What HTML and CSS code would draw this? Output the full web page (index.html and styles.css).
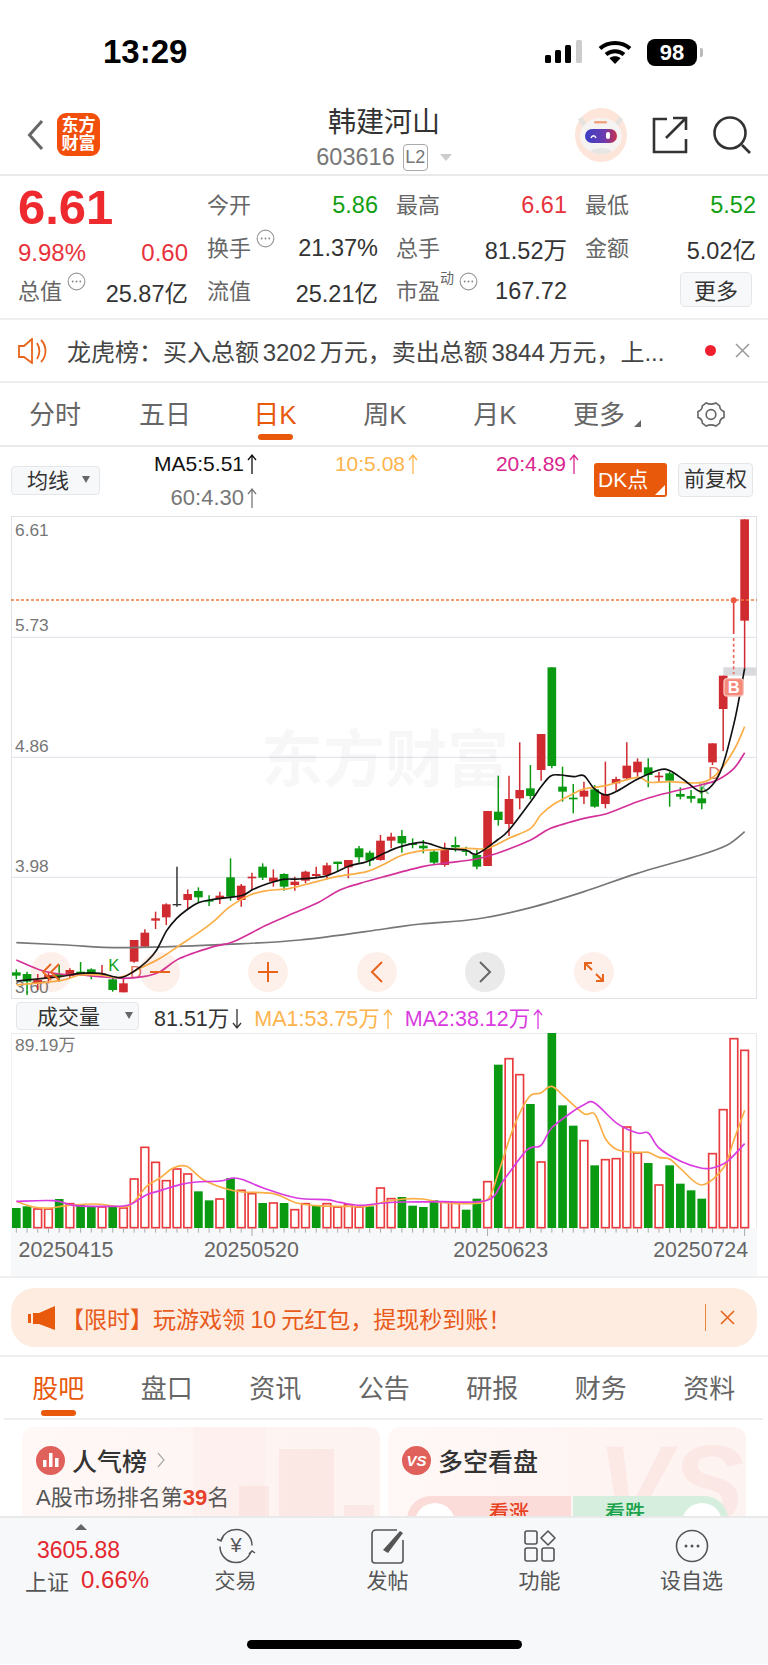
FILE: index.html
```html
<!DOCTYPE html>
<html lang="zh-CN">
  <head>
    <title>韩建河山</title>
    <meta charset="UTF-8" />
    <link rel="stylesheet" href="styles.css">
  </head>
  <body>
    <svg class="defs" width="0" height="0">
      <symbol id="up" viewBox="0 0 12 22"><path d="M6 21V2M2 7l4-5 4 5" fill="none" stroke="currentColor" stroke-width="1.3"/></symbol>
      <symbol id="down" viewBox="0 0 12 22"><path d="M6 1v19M2 15l4 5 4-5" fill="none" stroke="currentColor" stroke-width="1.3"/></symbol>
      <symbol id="info" viewBox="0 0 20 20"><circle cx="10" cy="10" r="8.8" fill="none" stroke="#999" stroke-width="1.2"/><circle cx="6" cy="10" r="1" fill="#888"/><circle cx="10" cy="10" r="1" fill="#888"/><circle cx="14" cy="10" r="1" fill="#888"/></symbol>
    </svg>
    <div id="page">
      <div class="status-bar">
        <span class="time">13:29</span>
        <div class="status-icons">
          <svg width="38" height="24" viewBox="0 0 38 24"><rect x="0" y="15" width="6" height="8" rx="1.5"/><rect x="10" y="10" width="6" height="13" rx="1.5"/><rect x="20" y="5" width="6" height="18" rx="1.5"/><rect x="31" y="0" width="6" height="23" rx="1.5" fill="#ccc"/></svg>
          <svg width="34" height="24" viewBox="0 0 34 24"><path d="M2 8.5C10 1 24 1 32 8.5" fill="none" stroke="#000" stroke-width="4"/><path d="M8 14.5c5-4.500 13-4.500 18 0" fill="none" stroke="#000" stroke-width="4"/><path d="M11.500 18.200c3-2.600 8-2.600 11 0L17 24z"/></svg>
          <div class="battery">98</div>
          <div class="battery-cap"></div>
        </div>
      </div>

      <div class="nav">
        <div class="nav-left">
          <svg width="17" height="32" viewBox="0 0 17 32"><path d="M15 2L2.500 16 15 30" fill="none" stroke="#666" stroke-width="3"/></svg>
          <div class="logo"><span>东方</span><span>财富</span></div>
        </div>
        <div class="nav-title">
          <div class="stock-name">韩建河山</div>
          <div class="stock-code">
            <span>603616</span>
            <span class="l2">L2</span>
            <i class="caret"></i>
          </div>
        </div>
        <div class="nav-right">
          <svg class="avatar" width="54" height="54" viewBox="0 0 54 54">
            <defs>
              <linearGradient id="visor" x1="0" x2="1"><stop offset="0" stop-color="#3b3fc4"/><stop offset="0.6" stop-color="#6a3bb0"/><stop offset="1" stop-color="#c9304a"/></linearGradient>
            </defs>
            <ellipse cx="27" cy="27" rx="26" ry="27" fill="#fde5da"/>
            <path d="M6 10l5 8M47 10l-5 8" stroke="#e6e2df" stroke-width="5"/>
            <ellipse cx="27" cy="28" rx="21" ry="18" fill="#f6f4f3"/>
            <rect x="20" y="13" width="13" height="2.500" rx="1.200" fill="#f0a67c"/>
            <rect x="11" y="21" width="32" height="14" rx="7" fill="url(#visor)"/>
            <path d="M17 30c1-3 4-3 5 0" fill="none" stroke="#fff" stroke-width="1.300"/>
            <rect x="32" y="24" width="4" height="7" rx="2" fill="#fff"/>
            <ellipse cx="27" cy="43" rx="10" ry="3" fill="#e9e5e2"/>
          </svg>
          <svg width="36" height="38" viewBox="0 0 36 38" fill="none" stroke="#333" stroke-width="2.600">
            <path d="M15 3H2v33h32V23"/><path d="M14 22L33 3M21 2h13v12"/>
          </svg>
          <svg width="38" height="38" viewBox="0 0 38 38" fill="none" stroke="#333" stroke-width="2.600">
            <circle cx="17" cy="17" r="15.500"/><path d="M29 29l8 8"/>
          </svg>
        </div>
      </div>

      <div class="quote">
        <div class="quote-left">
          <div class="price">6.61</div>
          <div class="change"><span>9.98%</span><span>0.60</span></div>
          <div class="cell"><span class="label">总值<svg class="info"><use href="#info"/></svg></span><span class="val">25.87亿</span></div>
        </div>
        <div class="quote-grid">
          <div class="cell"><span class="label">今开</span><span class="val green">5.86</span></div>
          <div class="cell"><span class="label">最高</span><span class="val red">6.61</span></div>
          <div class="cell"><span class="label">最低</span><span class="val green">5.52</span></div>
          <div class="cell"><span class="label">换手<svg class="info"><use href="#info"/></svg></span><span class="val">21.37%</span></div>
          <div class="cell"><span class="label">总手</span><span class="val">81.52万</span></div>
          <div class="cell"><span class="label">金额</span><span class="val">5.02亿</span></div>
          <div class="cell"><span class="label">流值</span><span class="val">25.21亿</span></div>
          <div class="cell"><span class="label">市盈<sup>动</sup><svg class="info"><use href="#info"/></svg></span><span class="val">167.72</span></div>
          <div class="cell cell-btn"><button type="button" class="more-btn">更多</button></div>
        </div>
      </div>

      <div class="notice">
        <svg width="31" height="26" viewBox="0 0 31 26" fill="none" stroke="#e8641c" stroke-width="1.800"><path d="M1 8h5l8-7v24l-8-6H1z"/><path d="M19 5c3 5 3 11 0 16M23 2c6 6 6 16 0 22"/></svg>
        <span class="notice-text">龙虎榜：买入总额 3202 万元，卖出总额 3844 万元，上...</span>
        <i class="red-dot"></i>
        <svg width="15" height="15" viewBox="0 0 15 15"><path d="M1 1l13 13M14 1L1 14" stroke="#999" stroke-width="1.500"/></svg>
      </div>

      <div class="period-tabs">
        <div class="tab">分时</div>
        <div class="tab">五日</div>
        <div class="tab active">日K</div>
        <div class="tab">周K</div>
        <div class="tab">月K</div>
        <div class="tab">更多<i class="corner"></i></div>
        <div class="tab">
          <svg width="30" height="27" viewBox="0 0 30 28" fill="none" stroke="#666" stroke-width="1.700" stroke-linejoin="round"><path d="M10 2Q15 4.500 20 2L24 5Q24 9.500 28.500 11V17Q24 18.500 24 23L20 26Q15 23.500 10 26L6 23Q6 18.500 1.500 17V11Q6 9.500 6 5Z"/><circle cx="15" cy="14" r="5"/></svg>
        </div>
      </div>

      <div class="ma-row">
        <div class="select ma-select">均线<i class="caret-dark"></i></div>
        <div class="ma-values">
          <span class="ma-black">MA5:5.51<svg class="arrow"><use href="#up"/></svg></span>
          <span class="ma-orange">10:5.08<svg class="arrow"><use href="#up"/></svg></span>
          <span class="ma-pink">20:4.89<svg class="arrow"><use href="#up"/></svg></span>
          <span class="ma-gray">60:4.30<svg class="arrow"><use href="#up"/></svg></span>
        </div>
        <div class="dk-btn">DK点</div>
        <div class="fq-btn">前复权</div>
      </div>

      <div class="kline">
        <svg id="kline-svg" viewBox="33 18 2238 1449" width="746" height="483"></svg>
        <div class="watermark">东方财富</div>
        <div class="chart-btns">
          <div class="chart-btn"><svg width="22" height="22" viewBox="0 0 22 22" fill="none" stroke="#e8641c" stroke-width="1.800"><path d="M11 3L3 11l8 8M19 3l-8 8 8 8"/></svg></div>
          <div class="chart-btn"><svg width="22" height="22" viewBox="0 0 22 22"><path d="M1 11h20" stroke="#e8641c" stroke-width="2"/></svg></div>
          <div class="chart-btn"><svg width="22" height="22" viewBox="0 0 22 22"><path d="M1 11h20M11 1v20" stroke="#e8641c" stroke-width="2"/></svg></div>
          <div class="chart-btn"><svg width="14" height="24" viewBox="0 0 14 24"><path d="M12 2L2 12l10 10" fill="none" stroke="#e8641c" stroke-width="2"/></svg></div>
          <div class="chart-btn chart-btn-gray"><svg width="14" height="24" viewBox="0 0 14 24"><path d="M2 2l10 10L2 22" fill="none" stroke="#666" stroke-width="2"/></svg></div>
          <div class="chart-btn"><svg width="22" height="22" viewBox="0 0 22 22" fill="none" stroke="#e8641c" stroke-width="2"><path d="M2 9V2h7M2 2l7 7M20 13v7h-7M20 20l-7-7"/></svg></div>
        </div>
      </div>

      <div class="vol-row">
        <div class="select vol-select">成交量<i class="caret-dark"></i></div>
        <span class="vol-now">81.51万<svg class="arrow"><use href="#down"/></svg></span>
        <span class="ma-orange">MA1:53.75万<svg class="arrow"><use href="#up"/></svg></span>
        <span class="ma-violet">MA2:38.12万<svg class="arrow"><use href="#up"/></svg></span>
      </div>

      <div class="volume">
        <svg id="vol-svg" viewBox="33 100 2238 729" width="746" height="243"></svg>
      </div>

      <div class="promo-wrap">
        <div class="promo">
          <svg width="28" height="24" viewBox="0 0 28 24" fill="#e8590c"><rect x="0" y="8" width="3" height="9"/><path d="M5 7h6L27 0v24L11 18H5z"/></svg>
          <span class="promo-text">【限时】玩游戏领 10 元红包，提现秒到账！</span>
          <i class="promo-sep"></i>
          <svg width="15" height="15" viewBox="0 0 15 15"><path d="M1 1l13 13M14 1L1 14" stroke="#e8641c" stroke-width="1.600"/></svg>
        </div>
      </div>

      <div class="info-tabs">
        <div class="tab active">股吧</div>
        <div class="tab">盘口</div>
        <div class="tab">资讯</div>
        <div class="tab">公告</div>
        <div class="tab">研报</div>
        <div class="tab">财务</div>
        <div class="tab">资料</div>
      </div>

      <div class="cards">
        <div class="card card-left">
          <div class="card-deco deco-bars"><i></i><i></i><i></i></div>
          <div class="card-head">
            <span class="card-icon"><svg width="18" height="16" viewBox="0 0 18 16" fill="#fff"><rect x="1" y="8" width="3.500" height="7"/><rect x="7" y="1" width="3.500" height="14"/><rect x="13" y="6" width="3.500" height="9"/></svg></span>
            <span class="card-title">人气榜</span>
            <svg width="8" height="16" viewBox="0 0 8 16"><path d="M1 1l6 7-6 7" fill="none" stroke="#aaa" stroke-width="1.200"/></svg>
          </div>
          <div class="card-sub">A股市场排名第<b>39</b>名</div>
        </div>
        <div class="card">
          <div class="card-deco deco-vs">VS</div>
          <div class="card-head">
            <span class="card-icon vs-icon">VS</span>
            <span class="card-title">多空看盘</span>
          </div>
          <div class="vote">
            <div class="vote-up"><i></i><span>看涨</span></div>
            <div class="vote-down"><span>看跌</span><i></i></div>
          </div>
        </div>
      </div>

      <div class="footer">
        <div class="footer-row">
          <div class="index-box">
            <i class="index-up"></i>
            <div class="index-price">3605.88</div>
            <div class="index-line"><span class="index-name">上证</span><span class="index-pct">0.66%</span></div>
          </div>
          <div class="foot-item">
            <svg width="42" height="36" viewBox="0 0 42 36" fill="none" stroke="#555" stroke-width="1.500">
              <path d="M6 12C9 5 15 1.500 21 1.500c9 0 16 7 16 16"/><path d="M36 24c-3 7-9 10.500-15 10.500-9 0-16-7-16-16"/>
              <path d="M2 11l4 2 2-4M40 25l-3-2-3 3"/>
              <text x="21" y="24" class="yen">¥</text>
            </svg>
            <span>交易</span>
          </div>
          <div class="foot-item">
            <svg width="36" height="36" viewBox="0 0 36 36" fill="none" stroke="#555" stroke-width="1.600">
              <path d="M27 2H6a4 4 0 0 0-4 4v26a3 3 0 0 0 3 3h25a3 3 0 0 0 3-3V12"/>
              <path d="M13 22L30 3l3 2-15 20z" fill="#555" stroke="none"/>
            </svg>
            <span>发帖</span>
          </div>
          <div class="foot-item">
            <svg width="32" height="34" viewBox="0 0 32 34" fill="none" stroke="#555" stroke-width="1.600">
              <rect x="1" y="2" width="12" height="13" rx="2"/>
              <rect x="1" y="19" width="12" height="13" rx="2"/>
              <rect x="18" y="19" width="12" height="13" rx="2"/>
              <path d="M24 2l7 7-7 7-7-7z" stroke-linejoin="round"/>
            </svg>
            <span>功能</span>
          </div>
          <div class="foot-item">
            <svg width="34" height="36" viewBox="0 0 34 36"><circle cx="17" cy="18" r="15.500" fill="none" stroke="#555" stroke-width="1.600"/><circle cx="11" cy="18" r="1.500" fill="#555"/><circle cx="17" cy="18" r="1.500" fill="#555"/><circle cx="23" cy="18" r="1.500" fill="#555"/></svg>
            <span>设自选</span>
          </div>
        </div>
        <div class="home-bar"></div>
      </div>
    </div>
    <script src="chart.js"></script>
  </body>
</html>
```

FILE: styles.css
```css
* {
  box-sizing: border-box;
}

body {
  margin: 0;
  font-family: "Liberation Sans", "Noto Sans CJK SC", sans-serif;
  background-color: white;
  color: #333;
}

i {
  display: block;
}

.defs {
  display: block;
  height: 0;
}

#page {
  width: 768px;
  height: 1665px;
  overflow: hidden;
}

/* status bar */
.status-bar {
  display: flex;
  align-items: center;
  justify-content: space-between;
  height: 95px;
  padding: 9px 65px 0 103px;
}

.time {
  font-size: 33px;
  font-weight: bold;
  color: #000;
}

.status-icons {
  display: flex;
  align-items: center;
  gap: 15px;
}

.battery {
  width: 50px;
  height: 27px;
  margin-right: -12px;
  border-radius: 8px;
  background-color: #000;
  color: white;
  font-size: 22px;
  font-weight: bold;
  line-height: 27px;
  text-align: center;
}

.battery-cap {
  width: 3px;
  height: 9px;
  border-radius: 0 2px 2px 0;
  background-color: #bbb;
}

/* nav */
.nav {
  display: grid;
  grid-template-columns: 1fr auto 1fr;
  align-items: center;
  height: 81px;
  border-bottom: 2px solid #e9e9e9;
}

.nav-left {
  display: flex;
  align-items: center;
  gap: 13px;
  padding-left: 27px;
}

.logo {
  display: flex;
  flex-direction: column;
  align-items: center;
  justify-content: center;
  width: 43px;
  height: 43px;
  border-radius: 9px;
  background-color: #f24f0c;
  color: white;
  font-size: 17px;
  font-weight: bold;
  line-height: 18px;
}

.nav-title {
  padding-top: 8px;
  text-align: center;
}

.stock-name {
  font-size: 28px;
  line-height: 34px;
  color: #333;
}

.stock-code {
  display: flex;
  align-items: center;
  gap: 8px;
  height: 28px;
  margin-top: 3px;
  font-size: 23.500px;
  color: #777;
}

.l2 {
  width: 25px;
  height: 27px;
  border: 1px solid #aaa;
  border-radius: 4px;
  font-size: 18px;
  line-height: 25px;
}

.caret {
  width: 0;
  height: 0;
  margin-left: 4px;
  border-top: 7px solid #ccc;
  border-left: 6px solid transparent;
  border-right: 6px solid transparent;
}

.nav-right {
  display: flex;
  align-items: center;
  justify-content: flex-end;
  gap: 25px;
  padding-right: 17px;
}

.avatar {
  margin-right: -1px;
}

/* quote */
.quote {
  display: flex;
  gap: 19px;
  height: 144px;
  padding: 8px 12px 0 18px;
  border-bottom: 2px solid #eee;
}

.quote-left {
  width: 170px;
  flex-shrink: 0;
}

.price {
  height: 49px;
  font-size: 49px;
  font-weight: bold;
  line-height: 46px;
  color: #ee2a2e;
}

.change {
  display: flex;
  justify-content: space-between;
  height: 37px;
  padding-top: 3px;
  font-size: 24px;
  line-height: 34px;
  color: #e8323c;
}

.quote-grid {
  display: grid;
  flex: 1;
  grid-template-columns: repeat(3, 171px);
  grid-auto-rows: 43px;
  column-gap: 18px;
  height: 129px;
}

.cell {
  display: flex;
  align-items: center;
  justify-content: space-between;
  height: 43px;
  white-space: nowrap;
}

.label {
  display: flex;
  margin-top: -6px;
  font-size: 22px;
  color: #666;
}

.label sup {
  margin-top: -4px;
  font-size: 14px;
  line-height: 18px;
}

.info {
  width: 19px;
  height: 19px;
  margin: 0 0 0 5px;
  transform: translateY(-1px);
}

.val {
  font-size: 23.500px;
  color: #333;
}

.green {
  color: #12a012;
}

.red {
  color: #e8323c;
}

.cell-btn {
  align-items: flex-start;
  justify-content: flex-end;
  padding-top: 2px;
  padding-right: 4px;
}

.more-btn {
  width: 72px;
  height: 35px;
  padding: 0 0 3px;
  border: 1px solid #e4e6ea;
  border-radius: 5px;
  background-color: #f7f8fa;
  color: #333;
  font-family: inherit;
  font-size: 22px;
}

/* notice */
.notice {
  display: flex;
  align-items: center;
  height: 63px;
  padding: 0 18px;
  border-bottom: 2px solid #eee;
}

.notice-text {
  flex: 1;
  margin-left: 18px;
  font-size: 24px;
  word-spacing: -3px;
  color: #444;
  white-space: nowrap;
}

.red-dot {
  width: 11px;
  height: 11px;
  margin-right: 19px;
  border-radius: 50%;
  background-color: #f01f2f;
}

/* tabs */
.period-tabs {
  display: grid;
  grid-template-columns: repeat(5, 110px) 98px 126px;
  height: 64px;
  border-bottom: 2px solid #e9e9e9;
}

.info-tabs {
  display: grid;
  grid-template-columns: repeat(7, 108.5px);
  height: 63px;
  margin: 0 5px 0 4px;
  border-bottom: 2px solid #eee;
}

.tab {
  display: flex;
  flex-direction: column;
  align-items: center;
  position: relative;
  padding-top: 16px;
  font-size: 26px;
  line-height: 32px;
  color: #666;
}

.tab svg {
  margin-top: 2px;
}

.tab::after {
  content: " ";
  display: block;
  width: 35px;
  height: 6px;
  margin-top: 3px;
  border-radius: 3px;
}

.info-tabs .tab::after {
  margin-top: 5px;
}

.tab.active {
  color: #e8590c;
}

.tab.active::after {
  background-color: #e8590c;
}

.corner {
  position: absolute;
  right: 7px;
  top: 37px;
  width: 0;
  height: 0;
  border-bottom: 7px solid #666;
  border-left: 7px solid transparent;
}

/* ma row */
.ma-row {
  display: flex;
  align-items: flex-start;
  height: 69px;
  padding-left: 11px;
}

.select {
  display: flex;
  align-items: center;
  justify-content: space-between;
  border: 1px solid #e4e6ea;
  border-radius: 4px;
  background-color: #f7f8fa;
  color: #333;
  font-size: 21px;
}

.ma-select {
  width: 89px;
  height: 29px;
  margin-top: 19px;
  padding: 0 9px 3px 15px;
}

.caret-dark {
  width: 0;
  height: 0;
  border-top: 7px solid #666;
  border-left: 4px solid transparent;
  border-right: 4px solid transparent;
}

.ma-values {
  display: grid;
  grid-template-columns: repeat(3, 161px);
  grid-auto-rows: 34px;
  width: 483px;
  margin-left: -3px;
  font-size: 21px;
  line-height: 34px;
  text-align: right;
}

.arrow {
  width: 12px;
  height: 22px;
  margin-left: 2px;
  vertical-align: -4px;
}

.ma-black {
  color: #111;
}

.ma-orange {
  color: #fdb44d;
}

.ma-pink {
  color: #d9268f;
}

.ma-gray {
  color: #777;
  font-size: 22px;
}

.ma-violet {
  color: #d93be0;
}

.dk-btn {
  position: relative;
  width: 73px;
  height: 34px;
  margin: 16px 0 0 14px;
  padding-left: 4px;
  border-radius: 3px;
  background-color: #e8590c;
  color: white;
  font-size: 21px;
  line-height: 34px;
}

.dk-btn::after {
  content: " ";
  position: absolute;
  right: 2px;
  bottom: 2px;
  width: 0;
  height: 0;
  border-bottom: 10px solid white;
  border-left: 10px solid transparent;
}

.fq-btn {
  width: 75px;
  height: 34px;
  margin: 16px 0 0 11px;
  border: 1px solid #e4e6ea;
  border-radius: 4px;
  background-color: #f7f8fa;
  font-size: 21px;
  line-height: 30px;
  text-align: center;
  white-space: nowrap;
}

/* charts */
.kline {
  position: relative;
  width: 746px;
  height: 483px;
  margin-left: 11px;
  box-shadow: inset 0 0 0 1px #dfe2e6;
}

.kline svg,
.volume svg {
  display: block;
}

.watermark {
  position: absolute;
  left: 250px;
  top: 210px;
  font-size: 62px;
  font-weight: bold;
  line-height: 70px;
  color: rgba(0, 0, 0, 0.03);
  white-space: nowrap;
}

.chart-btns {
  position: absolute;
  left: 20px;
  bottom: 7px;
  display: flex;
  gap: 68.600px;
}

.chart-btn {
  display: flex;
  align-items: center;
  justify-content: center;
  width: 40px;
  height: 40px;
  border-radius: 50%;
  background-color: rgba(240, 110, 50, 0.1);
}

.chart-btn-gray {
  background-color: #eaeaea;
}

.vol-row {
  display: flex;
  align-items: center;
  gap: 11px;
  height: 34px;
  padding-left: 16px;
  font-size: 21.500px;
  white-space: nowrap;
}

.vol-select {
  width: 123px;
  height: 28px;
  padding: 0 5px 2px 20px;
}

.vol-now {
  margin-left: 4px;
  color: #333;
}

.volume {
  width: 746px;
  height: 243px;
  margin-left: 11px;
}

/* svg chart parts */
.grid-line {
  stroke: #e4e6ee;
  stroke-width: 4;
}

.dash-line {
  stroke: #f07a3c;
  stroke-width: 4;
  stroke-dasharray: 9 6;
}

.axis-text {
  font-size: 52px;
  fill: #777;
}

.date-text {
  font-size: 64px;
  fill: #666;
  text-anchor: middle;
}

.flag-text {
  font-size: 50px;
}

.wick {
  stroke-width: 4.500;
}

.up {
  stroke: #cf2b30;
  fill: #cf2b30;
}

.dn {
  stroke: #0a9a12;
  fill: #0a9a12;
}

.flat {
  stroke: #333;
  fill: #333;
}

.ma-line {
  fill: none;
  stroke-width: 5;
  stroke-linejoin: round;
}

.vol-up {
  fill: white;
  stroke: #ea3b3f;
  stroke-width: 5;
}

.vol-dn {
  fill: #0a9a12;
}

.tick {
  stroke: #aaa;
  stroke-width: 3;
}

.axis-bg {
  fill: #f7f8fa;
}

/* promo */
.promo-wrap {
  height: 81px;
  padding: 10px 11px 0;
  border-top: 2px solid #eee;
  border-bottom: 2px solid #eee;
}

.promo {
  display: flex;
  align-items: center;
  height: 59px;
  padding: 0 22px 0 17px;
  border-radius: 24px;
  background-color: #fdecdf;
}

.promo-text {
  flex: 1;
  margin-left: 5px;
  font-size: 23px;
  word-spacing: -1px;
  color: #e8591a;
  white-space: nowrap;
}

.promo-sep {
  width: 1px;
  height: 27px;
  margin-right: 14px;
  background-color: #e8863c;
}

/* cards */
.cards {
  display: flex;
  gap: 8px;
  height: 96px;
  padding: 7px 22px 0;
  overflow: hidden;
}

.card {
  position: relative;
  width: 358px;
  height: 160px;
  padding: 18px 14px 0;
  border-radius: 12px;
  background: linear-gradient(90deg, #fff8f6, #fdf3f1);
  overflow: hidden;
}

.card-left {
  background:
    linear-gradient(90deg, transparent 171px, rgba(230, 80, 70, 0.03) 171px, rgba(230, 80, 70, 0.03) 243px, transparent 243px),
    linear-gradient(90deg, #fff8f6, #fdf3f1);
}

.card-head {
  position: relative;
  display: flex;
  align-items: center;
  gap: 7px;
  height: 30px;
}

.card-icon {
  display: flex;
  align-items: center;
  justify-content: center;
  width: 29px;
  height: 29px;
  border-radius: 50%;
  background-color: #e0605c;
}

.vs-icon {
  color: white;
  font-size: 15px;
  font-style: italic;
  font-weight: bold;
}

.card-title {
  font-size: 25px;
  font-weight: 500;
  color: #333;
}

.card-head svg {
  margin-left: 3px;
}

.card-icon svg {
  margin-left: 0;
}

.card-sub {
  position: relative;
  margin-top: 8px;
  font-size: 22px;
  line-height: 30px;
  color: #555;
}

.card-sub b {
  color: #e8412a;
}

.card-deco {
  position: absolute;
  color: rgba(230, 80, 70, 0.07);
}

.deco-bars {
  right: 6px;
  top: 18px;
  display: flex;
  align-items: flex-end;
  gap: 10px;
  height: 110px;
}

.deco-bars i {
  width: 30px;
  background-color: rgba(230, 80, 70, 0.07);
}

.deco-bars i:nth-child(1) {
  height: 69px;
}

.deco-bars i:nth-child(2) {
  height: 106px;
  width: 55px;
}

.deco-bars i:nth-child(3) {
  height: 50px;
}

.deco-vs {
  right: 2px;
  top: 2px;
  font-size: 110px;
  font-style: italic;
  font-weight: bold;
  line-height: 110px;
}

.vote {
  position: relative;
  display: flex;
  gap: 2px;
  height: 60px;
  margin-top: 21px;
  margin-left: 5px;
  width: 321px;
  font-size: 20px;
  font-weight: 500;
}

.vote-up,
.vote-down {
  display: flex;
  padding: 3px 6px;
  line-height: 28px;
}

.vote-up {
  width: 164px;
  gap: 34px;
  padding-left: 8px;
  border-radius: 24px 0 0 24px;
  background-color: #fbdcd8;
  color: #e8411e;
}

.vote-down {
  flex: 1;
  gap: 37px;
  justify-content: flex-end;
  border-radius: 0 24px 24px 0;
  background-color: #d5eedd;
  color: #1aa34a;
}

.vote i {
  width: 40px;
  height: 40px;
  margin-top: 4px;
  border-radius: 50%;
  background-color: white;
}

/* footer */
.footer {
  display: flex;
  flex-direction: column;
  height: 148px;
  border-top: 2px solid #e9e9e9;
  background-color: #f7f8fa;
}

.footer-row {
  display: grid;
  grid-template-columns: 154px repeat(4, 152px);
  padding: 6px 0 0 5.500px;
}

.index-box {
  padding-left: 19.500px;
}

.index-up {
  width: 0;
  height: 0;
  margin-left: 50px;
  border-bottom: 6px solid #666;
  border-left: 6px solid transparent;
  border-right: 6px solid transparent;
}

.index-price {
  margin: 6px 0 0 12px;
  font-size: 23px;
  line-height: 28px;
  color: #e3282f;
}

.index-line {
  display: flex;
  align-items: center;
  gap: 12px;
  height: 32px;
  margin-top: 0;
}

.index-name {
  font-size: 22px;
  color: #555;
}

.index-pct {
  font-size: 24px;
  color: #e3282f;
}

.foot-item {
  display: flex;
  flex-direction: column;
  align-items: center;
  padding-top: 4px;
  font-size: 21px;
  line-height: 28px;
  color: #555;
}

.foot-item svg {
  height: 36px;
  margin-bottom: 3px;
}

.yen {
  font-family: "Liberation Sans", sans-serif;
  font-size: 20px;
  fill: #555;
  stroke: none;
  text-anchor: middle;
}

.home-bar {
  align-self: center;
  width: 275px;
  height: 9px;
  margin-top: auto;
  margin-bottom: 15px;
  border-radius: 5px;
  background-color: #000;
}
```

FILE: chart.js
```js
var NS = 'http://www.w3.org/2000/svg';

// x and y below are in 3x chart units: 3 units to a screen pixel
function barX(i) {
  return 49 + 32.13 * i;
}

function add(parent, tag, attrs, text) {
  var node = document.createElementNS(NS, tag);
  for (var key in attrs) node.setAttribute(key, attrs[key]);
  if (text) node.textContent = text;
  parent.appendChild(node);
  return node;
}

// catmull-rom through the points, so the averages come out smooth
function smooth(points) {
  var d = 'M' + points[0][0] + ' ' + points[0][1];
  for (var i = 0; i < points.length - 1; i++) {
    var p0 = points[i - 1] || points[i];
    var p1 = points[i];
    var p2 = points[i + 1];
    var p3 = points[i + 2] || p2;
    d += 'C' + (p1[0] + (p2[0] - p0[0]) / 6) + ' ' + (p1[1] + (p2[1] - p0[1]) / 6) +
      ' ' + (p2[0] - (p3[0] - p1[0]) / 6) + ' ' + (p2[1] - (p3[1] - p1[1]) / 6) +
      ' ' + p2[0] + ' ' + p2[1];
  }
  return d;
}

function addLine(svg, points, color) {
  add(svg, 'path', { d: smooth(points), class: 'ma-line', stroke: color });
}

// type, high, low, body top, body bottom
var candles = [
  ['g',1378,1408,1387,1397],['g',1385,1455,1392,1415],['r',1392,1440,1410,1420],['r',1385,1420,1395,1405],
  ['g',1365,1415,1392,1400],['r',1375,1405,1380,1398],['g',1356,1395,1385,1390],['g',1375,1408,1378,1392],
  ['r',1365,1400,1390,1393],['g',1400,1445,1408,1440],['r',1405,1447,1420,1447],['r',1290,1358,1290,1355],
  ['r',1258,1310,1268,1310],['r',1205,1257,1225,1232],['r',1180,1245,1183,1222],['f',1070,1190,1182,1186],
  ['r',1138,1198,1152,1170],['g',1132,1178,1143,1162],['g',1156,1188,1170,1175],['r',1145,1182,1157,1167],
  ['g',1045,1172,1102,1160],['r',1122,1190,1127,1170],['r',1088,1140,1100,1105],['g',1060,1110,1070,1103],
  ['r',1078,1130,1103,1115],['g',1090,1142,1092,1130],['r',1100,1142,1115,1125],['r',1082,1120,1085,1112],
  ['r',1070,1105,1092,1098],['r',1058,1108,1066,1095],['g',1055,1085,1055,1062],['r',1050,1105,1050,1072],
  ['g',1008,1058,1015,1042],['g',1022,1068,1028,1052],['r',975,1052,992,1050],['r',968,1015,980,992],
  ['g',960,1028,978,1000],['g',985,1015,1000,1005],['g',990,1030,1007,1015],['g',1018,1065,1025,1058],
  ['r',998,1070,1018,1065],['g',980,1025,1005,1012],['g',1010,1037,1022,1026],['g',1020,1078,1035,1070],
  ['r',903,1068,903,1068],['g',797,947,905,930],['r',797,978,867,942],['r',697,898,840,865],
  ['g',765,868,835,858],['r',672,812,672,780],['g',472,775,472,768],['g',770,875,830,845],
  ['g',822,910,863,868],['r',815,882,842,860],['g',825,893,838,890],['r',755,895,852,882],
  ['r',800,842,807,820],['r',697,810,767,805],['r',745,800,755,787],['g',745,832,772,795],
  ['r',785,815,797,802],['g',785,890,790,812],['g',832,868,852,860],['g',840,878,858,866],
  ['g',830,898,865,880],['r',700,765,700,757],['r',497,723,497,597],null,['r',28,475,28,332]
];

var CLASS = { r: 'up', g: 'dn', f: 'flat' };

function drawKline() {
  var svg = document.getElementById('kline-svg');
  [382, 742, 1102].forEach(function (y) {
    add(svg, 'line', { x1: 33, x2: 2271, y1: y, y2: y, class: 'grid-line' });
  });
  add(svg, 'rect', { x: 2170, y: 472, width: 100, height: 25, fill: '#d8dade' });
  [['6.61',78],['5.73',362],['4.86',726],['3.98',1086],['3.60',1448]].forEach(function (t) {
    add(svg, 'text', { x: 45, y: t[1], class: 'axis-text' }, t[0]);
  });
  add(svg, 'text', { x: 325, y: 1383, class: 'flag-text', fill: '#12a012' }, 'K');
  add(svg, 'text', { x: 390, y: 1403, class: 'flag-text', fill: '#e0705c' }, 'D');
  add(svg, 'text', { x: 2125, y: 808, class: 'flag-text', fill: '#e0705c' }, 'D');
  add(svg, 'text', { x: 2095, y: 852, class: 'flag-text', fill: '#7dbb7d' }, 'K');

  candles.forEach(function (c, i) {
    if (!c) return;
    var x = barX(i);
    add(svg, 'line', { x1: x, x2: x, y1: c[1], y2: c[2], class: 'wick ' + CLASS[c[0]] });
    add(svg, 'rect', { x: x - 13, y: c[3], width: 26, height: c[4] - c[3], class: CLASS[c[0]], 'stroke-width': 0 });
  });

  // today's limit marker above the B flag
  var mx = 2201;
  add(svg, 'line', { x1: mx, x2: mx, y1: 270, y2: 372, stroke: '#e0403c', 'stroke-width': 5 });
  add(svg, 'line', { x1: mx, x2: mx, y1: 384, y2: 492, stroke: '#ee6a5c', 'stroke-width': 5, 'stroke-dasharray': '9 8' });
  add(svg, 'line', { x1: 33, x2: 2271, y1: 270, y2: 270, class: 'dash-line' });
  add(svg, 'circle', { cx: mx, cy: 271, r: 9, fill: '#ee5a40' });

  addLine(svg, [[49,1298],[200,1305],[370,1313],[680,1303],[900,1290],[1152,1257],[1262,1242],[1430,1227],[1592,1193],[1752,1145],[1912,1090],[2102,1035],[2182,1005],[2234,965]], '#777');
  addLine(svg, [[49,1350],[120,1380],[180,1392],[240,1395],[300,1400],[370,1405],[430,1400],[480,1385],[540,1345],[640,1310],[700,1295],[800,1245],[880,1210],[950,1180],[1020,1140],[1080,1120],[1152,1100],[1267,1070],[1332,1060],[1430,1047],[1492,1030],[1592,990],[1652,955],[1752,925],[1817,912],[1912,875],[1977,855],[2102,825],[2152,810],[2202,775],[2234,728]], '#d4309a');
  addLine(svg, [[49,1425],[180,1412],[240,1395],[300,1395],[360,1402],[420,1375],[480,1345],[540,1305],[600,1265],[640,1235],[690,1190],[750,1155],[800,1142],[870,1135],[950,1115],[1010,1100],[1100,1085],[1152,1063],[1202,1037],[1267,1022],[1332,1018],[1397,1015],[1462,1015],[1527,985],[1592,955],[1622,915],[1662,882],[1722,850],[1752,837],[1817,827],[1912,802],[1947,817],[2009,815],[2102,818],[2152,790],[2202,720],[2234,650]], '#fbae45');
  addLine(svg, [[49,1413],[100,1408],[180,1400],[240,1390],[300,1390],[360,1403],[400,1385],[440,1355],[470,1320],[500,1262],[530,1225],[560,1200],[595,1178],[640,1168],[690,1162],[730,1155],[760,1138],[800,1122],[850,1108],[900,1107],[970,1100],[1010,1085],[1050,1067],[1100,1055],[1152,1030],[1202,1010],[1267,997],[1332,1015],[1397,1020],[1430,1032],[1492,990],[1527,960],[1592,875],[1622,832],[1652,798],[1682,795],[1722,800],[1752,797],[1782,835],[1817,855],[1852,843],[1912,808],[1977,780],[2010,782],[2052,810],[2102,845],[2137,825],[2167,770],[2202,640],[2222,540],[2234,475]], '#111');

  // B flag sits on top of the lines
  add(svg, 'rect', { x: 2172, y: 506, width: 58, height: 52, rx: 10, fill: '#f5897a', stroke: '#f8c7bf', 'stroke-width': 4 });
  add(svg, 'text', { x: 2201, y: 549, 'text-anchor': 'middle', 'font-size': 50, 'font-weight': 'bold', fill: 'white' }, 'B');
}

// r = hollow red, g = filled green, value is the bar's top
var volumes = [
  'g625','g620','r628','r628','g598','r612','g615','g620','r622','g620','r625','r538','r443','r488',
  'r543','r508','r523','g575','g602','r598','g535','r572','r582','g610','r610','g610','r630','r612',
  'g618','r612','r622','r615','r622','g620','r565','r597','g592','g618','g622','g602','r607','r610',
  'g630','g597','r546','g195','r177','r225','g313','r487','g100','g317','g378','r423','g497','r480',
  'r477','r382','r460','g490','r556','g497','g552','g572','g597','r462','r330','r117','r152'
];

function drawVolume() {
  var svg = document.getElementById('vol-svg');
  var base = 685;
  add(svg, 'rect', { x: 33, y: 685, width: 2238, height: 144, class: 'axis-bg' });
  add(svg, 'path', { d: 'M33 685V101H2270V685', fill: 'none', stroke: '#e4e6ea', 'stroke-width': 3 });

  volumes.forEach(function (v, i) {
    var x = barX(i);
    var top = Number(v.slice(1));
    if (v[0] == 'g') {
      add(svg, 'rect', { x: x - 13, y: top, width: 26, height: base - top, class: 'vol-dn' });
    } else {
      add(svg, 'rect', { x: x - 11.5, y: top, width: 23, height: base - top - 1, class: 'vol-up' });
    }
    var major = [22, 44, 68].indexOf(i) != -1;
    add(svg, 'line', { x1: x, x2: x, y1: base, y2: base + (major ? 24 : 14), class: 'tick' });
  });

  addLine(svg, [[49,605],[100,622],[150,625],[200,618],[290,613],[370,622],[400,608],[440,560],[480,535],[520,505],[560,500],[610,540],[680,568],[730,577],[820,582],[890,610],[950,618],[1030,620],[1100,620],[1152,607],[1212,598],[1267,598],[1322,608],[1392,612],[1462,600],[1495,520],[1542,380],[1587,292],[1622,280],[1655,260],[1692,290],[1752,342],[1784,343],[1817,418],[1852,450],[1912,458],[1945,458],[1977,473],[2009,478],[2045,510],[2105,556],[2170,505],[2202,420],[2234,332]], '#fbae45');
  addLine(svg, [[49,605],[160,603],[220,617],[290,620],[370,619],[400,610],[440,585],[480,573],[540,555],[590,547],[660,544],[700,535],[730,540],[790,565],[890,595],[980,600],[1020,608],[1080,617],[1152,610],[1212,607],[1322,606],[1462,602],[1512,540],[1582,450],[1622,438],[1655,385],[1712,340],[1752,315],[1784,310],[1852,372],[1912,400],[1945,400],[1977,445],[2042,485],[2102,505],[2137,505],[2182,485],[2234,432]], '#d93be0');

  [['20250415',198],['20250520',754],['20250623',1502],['20250724',2102]].forEach(function (t) {
    add(svg, 'text', { x: t[1], y: 773, class: 'date-text' }, t[0]);
  });
  add(svg, 'text', { x: 45, y: 153, class: 'axis-text' }, '89.19万');
}

drawKline();
drawVolume();
```
